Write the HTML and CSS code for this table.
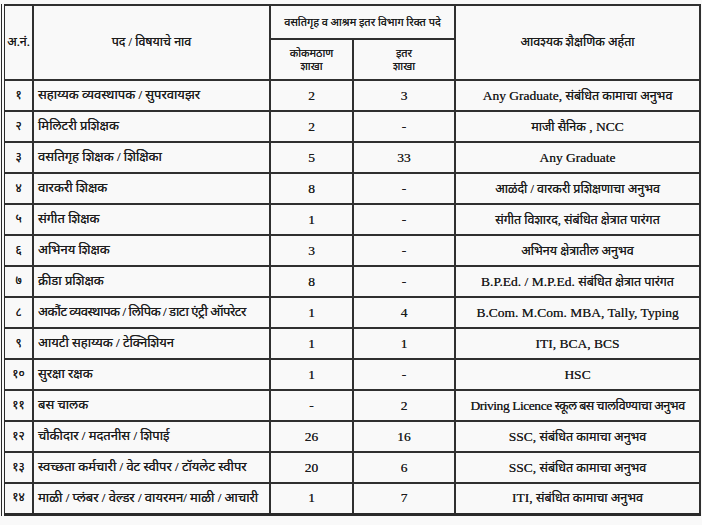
FILE: index.html
```html
<!DOCTYPE html>
<html lang="mr">
<head>
<meta charset="utf-8">
<link rel="stylesheet" href="styles.css">
</head>
<body>
<div class="page">
  <table class="jobs">
    <colgroup>
      <col class="c-no"><col class="c-post"><col class="c-a"><col class="c-b"><col class="c-q">
    </colgroup>
    <thead>
      <tr class="h1">
        <th rowspan="2">अ.नं.</th>
        <th rowspan="2">पद / विषयाचे नाव</th>
        <th colspan="2" class="small">वसतिगृह व आश्रम इतर विभाग रिक्त पदे</th>
        <th rowspan="2">आवश्यक शैक्षणिक अर्हता</th>
      </tr>
      <tr class="h2">
        <th class="small">कोकमठाण<br>शाखा</th>
        <th class="small">इतर<br>शाखा</th>
      </tr>
    </thead>
    <tbody>
      <tr><td class="no">१</td><td class="post">सहाय्यक व्यवस्थापक / सुपरवायझर</td><td class="num">2</td><td class="num">3</td><td class="q">Any Graduate, <span class="dv">संबंधित कामाचा अनुभव</span></td></tr>
      <tr><td class="no">२</td><td class="post">मिलिटरी प्रशिक्षक</td><td class="num">2</td><td class="num">-</td><td class="q"><span class="dv">माजी सैनिक</span> , NCC</td></tr>
      <tr><td class="no">३</td><td class="post">वसतिगृह शिक्षक / शिक्षिका</td><td class="num">5</td><td class="num">33</td><td class="q">Any Graduate</td></tr>
      <tr><td class="no">४</td><td class="post">वारकरी शिक्षक</td><td class="num">8</td><td class="num">-</td><td class="q"><span class="dv">आळंदी / वारकरी प्रशिक्षणाचा अनुभव</span></td></tr>
      <tr><td class="no">५</td><td class="post">संगीत शिक्षक</td><td class="num">1</td><td class="num">-</td><td class="q"><span class="dv">संगीत विशारद, संबंधित क्षेत्रात पारंगत</span></td></tr>
      <tr><td class="no">६</td><td class="post">अभिनय शिक्षक</td><td class="num">3</td><td class="num">-</td><td class="q"><span class="dv">अभिनय क्षेत्रातील अनुभव</span></td></tr>
      <tr><td class="no">७</td><td class="post">क्रीडा प्रशिक्षक</td><td class="num">8</td><td class="num">-</td><td class="q">B.P.Ed. / M.P.Ed. <span class="dv">संबंधित क्षेत्रात पारंगत</span></td></tr>
      <tr><td class="no">८</td><td class="post tight">अकौंट व्यवस्थापक / लिपिक / डाटा एंट्री ऑपरेटर</td><td class="num">1</td><td class="num">4</td><td class="q">B.Com. M.Com. MBA, Tally, Typing</td></tr>
      <tr><td class="no">९</td><td class="post">आयटी सहाय्यक / टेक्निशियन</td><td class="num">1</td><td class="num">1</td><td class="q">ITI, BCA, BCS</td></tr>
      <tr><td class="no">१०</td><td class="post">सुरक्षा रक्षक</td><td class="num">1</td><td class="num">-</td><td class="q">HSC</td></tr>
      <tr><td class="no">११</td><td class="post">बस चालक</td><td class="num">-</td><td class="num">2</td><td class="q tight">Driving Licence <span class="dv">स्कूल बस चालविण्याचा अनुभव</span></td></tr>
      <tr><td class="no">१२</td><td class="post">चौकीदार / मदतनीस / शिपाई</td><td class="num">26</td><td class="num">16</td><td class="q">SSC, <span class="dv">संबंधित कामाचा अनुभव</span></td></tr>
      <tr><td class="no">१३</td><td class="post">स्वच्छता कर्मचारी / वेट स्वीपर / टॉयलेट स्वीपर</td><td class="num">20</td><td class="num">6</td><td class="q">SSC, <span class="dv">संबंधित कामाचा अनुभव</span></td></tr>
      <tr><td class="no">१४</td><td class="post">माळी / प्लंबर / वेल्डर / वायरमन/ माळी / आचारी</td><td class="num">1</td><td class="num">7</td><td class="q">ITI, <span class="dv">संबंधित कामाचा अनुभव</span></td></tr>
    </tbody>
  </table>
</div>
</body>
</html>
```

FILE: styles.css
```css
html, body {
  margin: 0;
  padding: 0;
  background: #f9f9f9;
}
.page {
  width: 702px;
  height: 525px;
  overflow: hidden;
  padding: 4px 0 0 1px;
  box-sizing: border-box;
  background: #f9f9f9;
}
.jobs {
  border-collapse: collapse;
  table-layout: fixed;
  width: 697px;
  color: #1c1c1c;
  font-family: "Liberation Serif", "Noto Sans", "DejaVu Sans", serif;
  font-size: 13px;
  text-shadow: 0 0 0.3px #444;
  border-left: 4px double #2a2a2a;
  border-right: 2px solid #2a2a2a;
  border-top: 2px solid #2a2a2a;
  border-bottom: 3px solid #2a2a2a;
}
.c-no { width: 30px; }
.c-post { width: 237px; }
.c-a { width: 83px; }
.c-b { width: 102px; }
.c-q { width: 245px; }
.jobs th, .jobs td {
  border: 2px solid #303030;
  padding: 0;
  text-align: center;
  vertical-align: middle;
  font-weight: normal;
  line-height: 1.15;
}
.jobs th {
  font-size: 12.5px;
}
.jobs th.small {
  font-size: 11px;
}
.h1 { height: 34px; }
.h2 { height: 41px; }
.jobs tbody tr { height: 31px; }
.jobs td.no {
  font-size: 12px;
}
.jobs td.post {
  text-align: left;
  padding-left: 4px;
  white-space: nowrap;
  overflow: hidden;
}
.jobs td.tight {
  letter-spacing: -0.45px;
}
.jobs td.num {
  font-size: 13.5px;
}
.jobs td.q {
  font-size: 13.5px;
  white-space: nowrap;
  overflow: hidden;
}
.jobs .dv {
  font-size: 12.5px;
}
```
